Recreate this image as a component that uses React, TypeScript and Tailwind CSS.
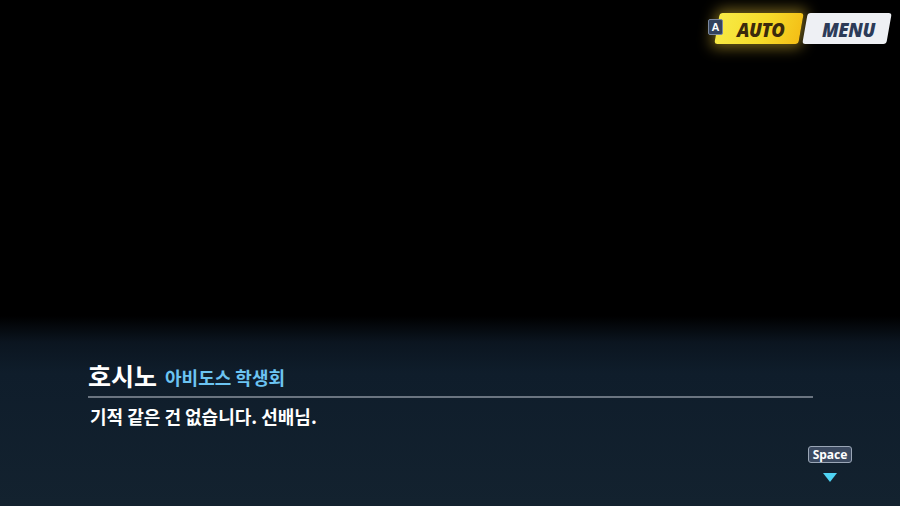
import React from 'react';

const font = { fontFamily: '"Noto Sans CJK KR", "Noto Sans", sans-serif' };
const latin = { fontFamily: '"Open Sans", "Liberation Sans", sans-serif' };

function TopButtons() {
  return (
    <div className="flex items-start justify-end gap-[4px] pr-[11px] pt-[13px]">
      <div className="relative flex items-center">
        <div className="h-[31px] w-[84px] -skew-x-[10deg] rounded-[3px] bg-[linear-gradient(100deg,#f7ea46_0%,#f6dc2a_55%,#f5cf22_75%,#f4be16_100%)] shadow-[0_0_14px_4px_rgba(250,210,60,0.45)]" />
        <span className="absolute left-[20px] top-[3px] text-[18.5px] font-black italic tracking-tight text-[#3b2a0c]" style={latin}>
          AUTO
        </span>
        <span className="absolute -left-[9px] top-[6px] flex h-[16px] w-[15px] items-center justify-center rounded-[2px] border border-[#7a88a0] bg-[#34435e] text-[11px] font-bold text-white" style={{ fontFamily: '"Liberation Sans", sans-serif' }}>
          A
        </span>
      </div>
      <div className="relative flex items-center">
        <div className="h-[31px] w-[84px] -skew-x-[10deg] rounded-[3px] bg-[#eef0f4]" />
        <span className="absolute left-[17px] top-[3px] text-[18.5px] font-black italic tracking-tight text-[#2c3b58]" style={latin}>
          MENU
        </span>
      </div>
    </div>
  );
}

export default function App() {
  return (
    <div className="flex h-[506px] w-[900px] flex-col overflow-hidden bg-black" style={font}>
      <TopButtons />
      <div className="flex-1" />
      <div className="flex h-[190px] flex-col bg-[linear-gradient(180deg,#000000_0%,#0b1520_14%,#0f1d2b_30%,#13222f_100%)] pl-[88px] pr-[48px] pt-[44px]">
        <div className="mr-[39px] flex flex-col">
          <div className="flex items-end gap-[8px] pb-[6px]">
            <span className="text-[25px] font-bold leading-[30px] text-white">호시노</span>
            <span className="pb-[2px] text-[18px] font-bold leading-[22px] text-[#6cc4f2]">아비도스 학생회</span>
          </div>
          <div className="h-[2px] w-full bg-[#6a7480]" />
          <div className="pl-[2px] pt-[5px] text-[18px] font-semibold leading-[26px] text-white">
            기적 같은 건 없습니다. 선배님.
          </div>
        </div>
        <div className="flex flex-1 flex-col items-end pt-[17px]">
          <div className="flex w-[44px] flex-col items-center">
            <span className="rounded-[3px] border border-[#9aa6b6] bg-[#3c4a60] px-[4px] text-[12px] font-bold leading-[15px] text-white" style={{ fontFamily: '"Noto Sans", sans-serif' }}>
              Space
            </span>
            <div className="mt-[10px] h-0 w-0 border-x-[7px] border-t-[9px] border-x-transparent border-t-[#4fd3f3]" />
          </div>
        </div>
      </div>
    </div>
  );
}
